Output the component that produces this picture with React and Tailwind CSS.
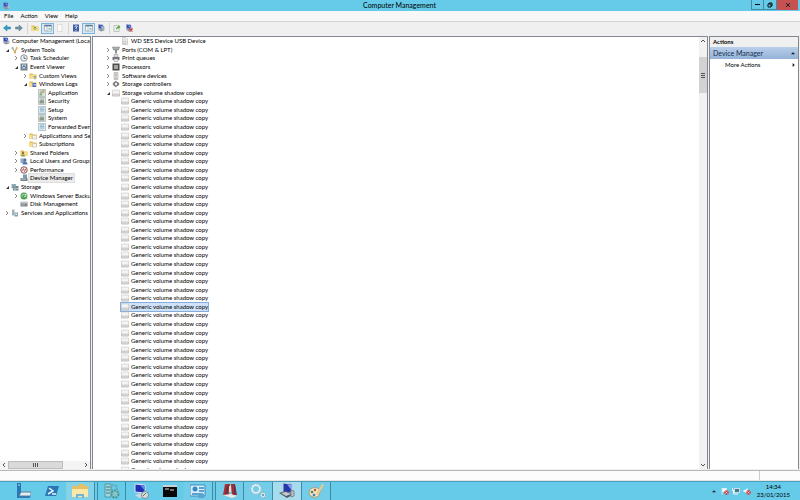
import React from 'react';

function Icon({ kind, className = 'h-2 w-2' }) {
  return (
    <svg viewBox="0 0 16 16" className={`shrink-0 ${className}`} aria-hidden="true">
      {art[kind]}
    </svg>
  );
}

const folder = (
  <>
    <path d="M1 3h6l1 2h7v9H1z" fill="#e3bd52" />
    <path d="M1 6h14v8H1z" fill="#f7dd86" />
  </>
);

const computer = (
  <>
    <path d="M3 1l9 1v8l-9-1z" fill="#3048b4" stroke="#8e9fc4" />
    <path d="M5 3l5 1v3z" fill="#8fb2f0" />
    <path d="M1 11l8-1 6 3-7 2z" fill="#8f949c" />
    <path d="M11 6l4 1v6l-4-1z" fill="#b7bcc4" />
  </>
);

const log = (
  <>
    <path d="M1 1h14v14H1z" fill="#dde3df" stroke="#8b938f" />
    <path d="M4 4h8M4 7h8M4 10h5" stroke="#8ba39c" strokeWidth="1.5" />
  </>
);

const art = {
  computer,
  logApp: (
    <>
      {log}
      <path d="M9 2h4v5H9z" fill="#dca94a" />
      <path d="M3 9h5v4H3z" fill="#7fae70" />
    </>
  ),
  logDark: (
    <>
      {log}
      <path d="M3 7h9v6H3z" fill="#8c9a8a" />
    </>
  ),
  logBlue: (
    <>
      <path d="M1 1h14v14H1z" fill="#d6e6ee" stroke="#7d97a5" />
      <path d="M4 4h8M4 7h8M4 10h8" stroke="#7fa9bd" strokeWidth="1.5" />
    </>
  ),
  tools: (
    <>
      <path d="M2 1l3 2 1 4 5 7-3 1-4-7-3-3z" fill="#a9aeb4" />
      <path d="M11 1l3 3-3 4-2 7-4-1 4-8z" fill="#dfb154" />
    </>
  ),
  clock: (
    <>
      <circle cx="8" cy="8" r="6.5" fill="#f1f4f6" stroke="#8a939b" strokeWidth="2" />
      <path d="M8 4v5h4" fill="none" stroke="#4d5660" strokeWidth="1.5" />
    </>
  ),
  viewer: (
    <>
      <path d="M1 1h14v14H1z" fill="#71828b" />
      <path d="M4 3h8v8H4z" fill="#c0d4de" />
      <path d="M5 9l3-4 4 5" fill="none" stroke="#3a5c9a" strokeWidth="2" />
    </>
  ),
  folderFilter: (
    <>
      {folder}
      <path d="M8 8h7l-2 3v4h-2v-4z" fill="#6ba3c9" />
    </>
  ),
  folderLog: (
    <>
      {folder}
      <path d="M7 6h7v8H7z" fill="#4a68c4" />
      <path d="M9 8h5v3H9z" fill="#b4c7f1" />
    </>
  ),
  subs: (
    <>
      {folder}
      <path d="M7 7h8v7H7z" fill="#f4f4ee" stroke="#b0a994" />
    </>
  ),
  shared: (
    <>
      {folder}
      <circle cx="6" cy="8" r="2.5" fill="#8a774a" />
      <path d="M2 15c0-6 8-6 8 0z" fill="#8a9b5a" />
    </>
  ),
  users: (
    <>
      <path d="M1 3h10v9H1z" fill="#8fa6c4" />
      <circle cx="10" cy="6" r="3" fill="#5d6d8b" />
      <path d="M5 15c0-8 10-8 10 0z" fill="#4f79b4" />
    </>
  ),
  perf: (
    <>
      <circle cx="8" cy="8" r="6.5" fill="#f6eeee" stroke="#7c5a5a" strokeWidth="2" />
      <path d="M4 10l3-5 2 6 3-6" fill="none" stroke="#c43838" strokeWidth="1.5" />
    </>
  ),
  device: (
    <>
      <path d="M6 1h8v7H6z" fill="#7898b4" />
      <path d="M1 8h14v6H1z" fill="#7b858b" />
      <path d="M3 10h8" stroke="#dfe4e6" strokeWidth="1.5" />
    </>
  ),
  storage: (
    <>
      <path d="M1 2h9v9H1z" fill="#8faeb8" />
      <path d="M4 6h11v4H4zM4 11h11v4H4z" fill="#6d8792" />
      <path d="M6 8h4M6 13h4" stroke="#d6e6ea" />
    </>
  ),
  backup: (
    <>
      <circle cx="8" cy="8" r="7" fill="#4ea354" />
      <path d="M4 9a4 4 0 0 1 7-3l1-2v5H8" fill="none" stroke="#e2f5e0" strokeWidth="1.5" />
    </>
  ),
  disk: (
    <>
      <path d="M1 4h14v9H1z" fill="#7f8588" />
      <path d="M2 3h12l1 4H1z" fill="#c4c8ca" />
      <path d="M3 10h7" stroke="#e5e8e9" />
    </>
  ),
  services: (
    <>
      <path d="M2 1h5v12H2z" fill="#a4b2b8" />
      <path d="M7 7h7v8H7z" fill="#86a4b4" />
      <path d="M9 9h3v3H9z" fill="#dceaf0" />
    </>
  ),
  usb: <path d="M3 1h7l3 3v11H3zM5 6h5M5 9h5v4H5z" fill="#f2f2f2" stroke="#a7a7a7" />,
  ports: (
    <>
      <path d="M1 2h14l-2 6H3z" fill="#a3a8a8" stroke="#747a7a" />
      <path d="M6 8h4v7H6z" fill="#8a9090" />
      <path d="M4 4h8" stroke="#eee" strokeDasharray="1 1" />
    </>
  ),
  printer: (
    <>
      <path d="M4 1h8v5H4z" fill="#e4e4e4" stroke="#888" />
      <path d="M1 6h14v6H1z" fill="#70767a" />
      <path d="M4 10h8v5H4z" fill="#eee" stroke="#888" />
    </>
  ),
  cpu: (
    <>
      <path d="M1 1h14v14H1z" fill="#4a4a4a" />
      <path d="M4 4h8v8H4z" fill="#a4a8a4" />
    </>
  ),
  software: (
    <>
      <path d="M4 1h8v14H4z" fill="#e0e0e0" stroke="#999" />
      <path d="M6 4h3M6 7h3M6 12h4" stroke="#666" />
    </>
  ),
  controller: (
    <path d="M9 1v3h3l3 4-3 4H9v3l-5-3-3-4 3-4zM8 5L5 8l3 3 3-3z" fill="#777" fillRule="evenodd" />
  ),
  volume: (
    <>
      <path d="M1 2h14v12H1z" fill="#f4f4f4" stroke="#bdbdbd" />
      <path d="M1 10h14v4H1z" fill="#dadada" stroke="#b0b0b0" />
    </>
  ),
  back: <path d="M1 8l7-6v4h7v4H8v4z" fill="#2d9fc6" stroke="#1d7fa4" />,
  forward: <path d="M15 8L8 2v4H1v4h7v4z" fill="#6d8fa4" stroke="#56788c" />,
  up: (
    <>
      {folder}
      <path d="M8 12V7M5 9l3-3 3 3" fill="none" stroke="#4b9648" strokeWidth="1.5" />
    </>
  ),
  panel: (
    <>
      <path d="M1 2h14v12H1z" fill="#f8fbfd" stroke="#76828c" />
      <path d="M1 2h14v3H1z" fill="#5f7f9e" />
      <path d="M6 5v9" stroke="#76828c" />
      <path d="M9 8h4v3H9z" fill="#7eb38c" />
    </>
  ),
  page: <path d="M3 1h9v14H3z" fill="#fafafa" stroke="#c4c4c4" />,
  help: (
    <>
      <path d="M2 1h12v14H2z" fill="#3f60a8" />
      <path d="M6 6c0-4 5-3 4 0L8 8v2M8 12v2" fill="none" stroke="#fff" strokeWidth="1.7" />
    </>
  ),
  scan: (
    <>
      {computer}
      <circle cx="11" cy="7" r="3" fill="#aac6dc" stroke="#5a7593" />
    </>
  ),
  enable: (
    <>
      <path d="M2 3h10v12H2z" fill="#eef3ee" stroke="#8b988b" />
      <path d="M6 12c0-5 2-7 5-7V2l4 4-4 4V7" fill="#4aa54c" />
    </>
  ),
  remove: (
    <>
      {computer}
      <path d="M9 9l6 6M15 9l-6 6" stroke="#d23a3a" strokeWidth="2.5" />
    </>
  ),
  server: (
    <>
      <path d="M2 0h4v15H2z" fill="#2778b4" />
      <path d="M3 2h2" stroke="#b9e0f5" />
      <path d="M6 9h10v4H4z" fill="#e2edf4" stroke="#5c7f99" />
      <path d="M4 13h11v2H4z" fill="#357ab0" />
    </>
  ),
  powershell: (
    <>
      <path d="M4 3h11l-3 10H1z" fill="#2c75b4" />
      <path d="M5 5l4 3-5 3M8 11h4" fill="none" stroke="#e7f5fc" strokeWidth="1.5" />
    </>
  ),
  explorer: (
    <>
      <path d="M0 3h6l1-2h5l1 2h3v11H0z" fill="#e3bf66" />
      <path d="M0 6h16v8H0z" fill="#f9e8a8" />
      <path d="M4 11h8v4h-2v-2H6v2H4z" fill="#70b4d8" />
    </>
  ),
  cluster: (
    <>
      <path d="M1 1h6v13H1z" fill="#a5d5d6" stroke="#4c9ba7" />
      <path d="M2 4h4M2 7h4M2 10h4" stroke="#397f8b" />
      <circle cx="10" cy="5" r="3" fill="none" stroke="#65a8b6" strokeWidth="2" strokeDasharray="2 1" />
      <circle cx="11" cy="11" r="3.5" fill="#88c4c5" stroke="#44949c" strokeWidth="2" strokeDasharray="2 1" />
    </>
  ),
  remote: (
    <>
      <path d="M2 1l10 1v8L2 9z" fill="#1c2fb4" stroke="#dbe6f1" />
      <path d="M7 2l5 1v5z" fill="#6888ea" />
      <path d="M2 12l6-2 3 4-5 1z" fill="#cdd5da" />
      <circle cx="12" cy="12" r="3.5" fill="#d7dde0" stroke="#7b8e98" />
      <path d="M10 13l3-3" stroke="#4a7e49" />
    </>
  ),
  cmd: (
    <>
      <path d="M1 2h14v12H1z" fill="#080808" />
      <path d="M1 2h14v2H1z" fill="#c8d1d5" />
      <path d="M3 6h4M8 7h4" stroke="#ddd" />
    </>
  ),
  control: (
    <>
      <path d="M0 2h15v11H0z" fill="#d6edf8" stroke="#3b8dbd" />
      <circle cx="5" cy="6" r="2.5" fill="#3489c4" />
      <path d="M9 5h5M9 8h5M2 11h11" stroke="#3489c4" strokeWidth="1.5" />
      <path d="M8 11h6v4H8z" fill="#5ba6d0" />
    </>
  ),
  toolbox: (
    <>
      <path d="M3 1h5l-1 11H1z" fill="#b13132" />
      <path d="M9 1h4l2 11h-5z" fill="#a02c34" />
      <path d="M5 2h2L5 11H3zM12 2h1l1 9h-2z" fill="#5b3548" />
      <path d="M7 3h2v6H7z" fill="#f1d6d1" />
      <path d="M1 12l8-1 6 2-5 2z" fill="#ebe8e8" />
    </>
  ),
  gears: (
    <>
      <circle cx="6" cy="6" r="4" fill="none" stroke="#e1f0f6" strokeWidth="2" />
      <circle cx="6" cy="6" r="5.3" fill="none" stroke="#a4c5d3" strokeWidth="1.5" strokeDasharray="2 1.5" />
      <circle cx="13" cy="12" r="2" fill="#56afcc" stroke="#e1f0f6" strokeWidth="1.5" />
      <circle cx="13" cy="12" r="2.7" fill="none" stroke="#67889c" strokeDasharray="1 1" />
    </>
  ),
  manage: (
    <>
      <path d="M4 0l9 1v9l-9-1z" fill="#2438a8" stroke="#c4cee6" />
      <path d="M8 1l5 1v6z" fill="#86a2ec" />
      <path d="M0 10l6-2 9 3-7 4z" fill="#4f5963" />
      <path d="M2 10l5-1 5 2-5 2z" fill="#c6ccd1" />
      <path d="M12 7l3 1v5l-3 1z" fill="#b9c2c9" stroke="#7c8791" />
    </>
  ),
  palette: (
    <>
      <path d="M1 10c0-5 6-7 10-4 4 3 0 4 0 5 1 4-9 5-10-1z" fill="#eee4bd" stroke="#a89d78" />
      <circle cx="4" cy="9" r="1.3" fill="#428d56" />
      <circle cx="7" cy="7" r="1.2" fill="#c65043" />
      <circle cx="6" cy="12" r="1.3" fill="#4679c0" />
      <path d="M8 11l6-10 2 1-6 10z" fill="#e8c98c" />
    </>
  ),
  flag: (
    <>
      <path d="M2 2v13M3 3h8v6H3z" fill="#fff" stroke="#eef5f8" strokeWidth="1.5" />
      <circle cx="11" cy="11" r="4.5" fill="#cf3d48" />
      <path d="M9 9l4 4M13 9l-4 4" stroke="#fff" strokeWidth="1.3" />
    </>
  ),
  network: (
    <>
      <path d="M5 3h10v8H5z" fill="#49778e" stroke="#f1f6f8" strokeWidth="1.5" />
      <path d="M1 2v5h4M3 7v7h9" fill="none" stroke="#f1f6f8" strokeWidth="2" />
    </>
  ),
  sound: (
    <>
      <path d="M1 6h3l5-4v12l-5-4H1z" fill="#f1f6f8" />
      <circle cx="11" cy="11" r="4.5" fill="#cf3d48" />
      <path d="M9 9l4 4M13 9l-4 4" stroke="#fff" strokeWidth="1.3" />
    </>
  ),
};

function Arrow({ state }) {
  return (
    <svg viewBox="0 0 6 6" className="h-1.5 w-1.5 shrink-0" aria-hidden="true">
      {state === 'open' && <path d="M5 2v3H2z" fill="#333" />}
      {state === 'closed' && <path d="M2 1l2 2-2 2" fill="none" stroke="#888" />}
    </svg>
  );
}

const indents = ['pl-0', 'pl-1', 'pl-[13px]', 'pl-[22px]', 'pl-[31px]'];

const tree = [
  [1, 'open', 'tools', 'System Tools'],
  [2, 'closed', 'clock', 'Task Scheduler'],
  [2, 'open', 'viewer', 'Event Viewer'],
  [3, 'closed', 'folderFilter', 'Custom Views'],
  [3, 'open', 'folderLog', 'Windows Logs'],
  [4, '', 'logApp', 'Application'],
  [4, '', 'logDark', 'Security'],
  [4, '', 'logBlue', 'Setup'],
  [4, '', 'logDark', 'System'],
  [4, '', 'logBlue', 'Forwarded Event'],
  [3, 'closed', 'subs', 'Applications and Se'],
  [3, '', 'subs', 'Subscriptions'],
  [2, 'closed', 'shared', 'Shared Folders'],
  [2, 'closed', 'users', 'Local Users and Groups'],
  [2, 'closed', 'perf', 'Performance'],
  [2, '', 'device', 'Device Manager', true],
  [1, 'open', 'storage', 'Storage'],
  [2, 'closed', 'backup', 'Windows Server Backup'],
  [2, '', 'disk', 'Disk Management'],
  [1, 'closed', 'services', 'Services and Applications'],
];

const devices = [
  ['closed', 'ports', 'Ports (COM & LPT)'],
  ['closed', 'printer', 'Print queues'],
  ['closed', 'cpu', 'Processors'],
  ['closed', 'software', 'Software devices'],
  ['closed', 'controller', 'Storage controllers'],
  ['open', 'volume', 'Storage volume shadow copies'],
];

const copies = Array.from({ length: 44 }, (_, i) => i);
const selectedCopy = 24;

const toolGroups = [
  [
    ['back', 'Back'],
    ['forward', 'Forward'],
  ],
  [
    ['up', 'Up one level'],
    ['panel', 'Show console tree', true],
    ['page', 'Properties'],
  ],
  [
    ['help', 'Help'],
    ['panel', 'Show action pane', true],
    ['scan', 'Scan for hardware changes'],
  ],
  [
    ['enable', 'Update driver'],
    ['remove', 'Uninstall'],
  ],
];

const tasks = [
  ['server', 'Server Manager', ''],
  ['powershell', 'PowerShell', ''],
  ['explorer', 'File Explorer', 'bg-[#84d1e8] border-r border-[#3c8ba5]'],
  ['cluster', 'Cluster Manager', 'border-x border-[#3c8ba5]'],
  ['remote', 'Remote Desktop', ''],
  ['cmd', 'Command Prompt', ''],
  ['control', 'Control Panel', 'bg-[#73cce8] border-r border-[#3c8ba5]'],
  ['toolbox', 'Toolbox', 'bg-[#73cce8] border-x border-[#3c8ba5]'],
  ['gears', 'Services', 'bg-[#73cce8] border-r border-[#3c8ba5]'],
  ['manage', 'Computer Management', 'bg-[#a6dced] border-r border-[#3c8ba5]'],
  ['palette', 'Paint', 'bg-[#73cce8] border-r border-[#3c8ba5]'],
];

function TreeRow({ level, state, icon, label, selected }) {
  return (
    <li className={`flex min-h-0 items-center ${indents[level]}`}>
      <Arrow state={state} />
      <Icon kind={icon} className="ml-px h-2 w-2" />
      <span className={`ml-px px-px ${selected ? 'bg-[#ececec] outline outline-[#dedede]' : ''}`}>{label}</span>
    </li>
  );
}

function Chevron({ d }) {
  return (
    <svg viewBox="0 0 8 8" className="h-2 w-2" aria-hidden="true">
      <path d={d} fill="none" stroke="#555" />
    </svg>
  );
}

export default function App() {
  return (
    <div className="flex h-screen flex-col overflow-hidden bg-[#f0f0f0] font-[Lato,sans-serif] text-[6px] leading-[8px] whitespace-nowrap text-black">
      <header className="flex h-[11px] shrink-0 items-start bg-[#66cae9]">
        <div className="flex h-[11px] w-12 items-center pl-0.5">
          <Icon kind="computer" />
        </div>
        <h1 className="flex-1 text-center text-[7px] leading-[11px]">Computer Management</h1>
        <div className="flex h-[10px]">
          <button aria-label="Minimize" className="flex w-[13px] items-center justify-center border border-t-0 border-[#438ba3]">
            <span className="h-px w-[5px] bg-black" />
          </button>
          <button aria-label="Restore" className="flex w-[13px] items-center justify-center border-r border-b border-[#438ba3]">
            <svg viewBox="0 0 6 6" className="h-1.5 w-1.5" aria-hidden="true">
              <path d="M2 2V1h3v3H4M1 2h3v3H1z" fill="none" stroke="#111" />
            </svg>
          </button>
          <button aria-label="Close" className="flex w-[21px] items-center justify-center bg-[#c75050]">
            <svg viewBox="0 0 6 6" className="h-1.5 w-1.5" aria-hidden="true">
              <path d="M1 1l4 4M5 1L1 5" stroke="#222" />
            </svg>
          </button>
          <span className="w-0.5" />
        </div>
      </header>

      <nav className="flex h-[11px] shrink-0 items-center gap-[7px] border-b border-[#d4d4d4] bg-[#f7f7f7] pl-1">
        {['File', 'Action', 'View', 'Help'].map((m) => (
          <button key={m}>{m}</button>
        ))}
      </nav>

      <div className="flex h-[14px] shrink-0 items-center divide-x divide-[#d4d4d4] pb-0.5">
        {toolGroups.map((group, g) => (
          <div key={g} className="flex items-center pr-0.5 pl-px">
            {group.map(([icon, label, pressed]) => (
              <button
                key={label}
                aria-label={label}
                className={`flex h-[11px] items-center justify-center ${pressed ? 'w-[13px] border border-[#7fb5dc] bg-[#d4e8f6]' : 'w-3'}`}
              >
                <Icon kind={icon} />
              </button>
            ))}
          </div>
        ))}
      </div>

      <main className="flex min-h-0 flex-1 pr-px">
        <section className="flex w-[91px] shrink-0 flex-col overflow-hidden border border-b-0 border-l-0 border-[#828790] bg-white">
          <ul className="grid h-[180px] shrink-0 auto-rows-fr" aria-label="Console tree">
            <li className="flex min-h-0 items-center pl-0.5">
              <Icon kind="computer" />
              <span className="ml-0.5">Computer Management (Local</span>
            </li>
            {tree.map(([level, state, icon, label, selected]) => (
              <TreeRow key={label} level={level} state={state} icon={icon} label={label} selected={selected} />
            ))}
          </ul>
          <div className="mt-auto flex h-2 shrink-0 items-center bg-[#f4f4f4]">
            <button aria-label="Scroll left">
              <Chevron d="M5 2L3 4l2 2" />
            </button>
            <div className="flex flex-1">
              <div className="flex h-2 w-[55px] items-center justify-center gap-px border border-[#bcbcbc] bg-[#dadada]">
                <span className="h-1 w-px bg-[#555]" />
                <span className="h-1 w-px bg-[#555]" />
                <span className="h-1 w-px bg-[#555]" />
              </div>
            </div>
            <button aria-label="Scroll right">
              <Chevron d="M3 2l2 2-2 2" />
            </button>
          </div>
        </section>

        <section className="ml-px flex min-w-0 flex-1 border border-b-0 border-[#828790] bg-white">
          <div className="min-w-0 flex-1 overflow-hidden">
            <ul className="grid h-[437px] auto-rows-fr" aria-label="Devices">
              <li className="flex min-h-0 items-center pl-7">
                <Icon kind="usb" />
                <span className="ml-px px-px">WD SES Device USB Device</span>
              </li>
              {devices.map(([state, icon, label]) => (
                <li key={label} className="flex min-h-0 items-center pl-3">
                  <Arrow state={state} />
                  <Icon kind={icon} className="ml-px h-2 w-2" />
                  <span className="ml-px px-px">{label}</span>
                </li>
              ))}
              {copies.map((i) => (
                <li key={i} className="flex min-h-0 items-center pl-7">
                  <span className={`flex items-center ${i === selectedCopy ? 'bg-[#cfe2f8] outline outline-[#84acdd]' : ''}`}>
                    <Icon kind="volume" />
                    <span className="ml-px pl-px">Generic volume shadow copy</span>
                  </span>
                </li>
              ))}
            </ul>
          </div>
          <div className="flex w-2 shrink-0 flex-col bg-[#f1f1f1]">
            <button aria-label="Scroll up">
              <Chevron d="M2 5l2-2 2 2" />
            </button>
            <div className="flex-1 pt-3">
              <div className="flex h-[36px] flex-col items-center justify-center gap-px bg-[#d2d2d2]">
                <span className="h-px w-1 bg-[#555]" />
                <span className="h-px w-1 bg-[#555]" />
                <span className="h-px w-1 bg-[#555]" />
              </div>
            </div>
            <button aria-label="Scroll down">
              <Chevron d="M2 3l2 2 2-2" />
            </button>
          </div>
        </section>

        <aside className="ml-px w-[90px] shrink-0 border border-b-0 border-[#828790] bg-white">
          <h2 className="h-[10px] bg-[#f0f0f0] pl-[3px] leading-[10px] font-bold">Actions</h2>
          <div className="flex h-[12px] items-center justify-between bg-linear-to-b from-[#b9cfea] to-[#94b2d8] pr-[3px] pl-[3px] text-[7px] text-[#15304f]">
            <h3>Device Manager</h3>
            <svg viewBox="0 0 6 4" className="h-1 w-1" aria-hidden="true">
              <path d="M0 4l3-3 3 3z" fill="#111" />
            </svg>
          </div>
          <button className="flex h-[11px] w-full items-center justify-between pr-0.5 pl-[15px]">
            More Actions
            <svg viewBox="0 0 4 6" className="h-1 w-1" aria-hidden="true">
              <path d="M0 0l3 3-3 3z" fill="#111" />
            </svg>
          </button>
        </aside>
      </main>

      <div className="flex h-3 shrink-0 pt-px">
        <div className="flex flex-1 border-y border-t-[#b8b8b8] border-b-[#e4e4e4] bg-[#fcfcfc]">
          <span className="flex-1" />
          <span className="w-[41px] border-l border-[#ccc]" />
        </div>
      </div>

      <footer className="flex h-[19px] shrink-0 items-stretch border-t border-[#4a9fba] bg-[#66cae9] pl-2">
        {tasks.map(([icon, label, look]) => (
          <button
            key={label}
            aria-label={label}
            className={`flex w-[29px] items-center justify-center ${look} ${icon === 'cluster' || icon === 'toolbox' ? 'ml-0.5' : ''}`}
          >
            <Icon kind={icon} className="h-4 w-4" />
          </button>
        ))}
        <div className="ml-auto flex items-center gap-[3px]">
          <button aria-label="Show hidden icons">
            <svg viewBox="0 0 6 4" className="mr-0.5 h-1 w-1" aria-hidden="true">
              <path d="M0 4l3-3 3 3z" fill="#222" />
            </svg>
          </button>
          <Icon kind="flag" />
          <Icon kind="network" />
          <Icon kind="sound" />
        </div>
        <time className="mr-[10px] ml-[6px] flex flex-col justify-center text-center">
          <span>14:34</span>
          <span>23/01/2015</span>
        </time>
      </footer>
    </div>
  );
}
